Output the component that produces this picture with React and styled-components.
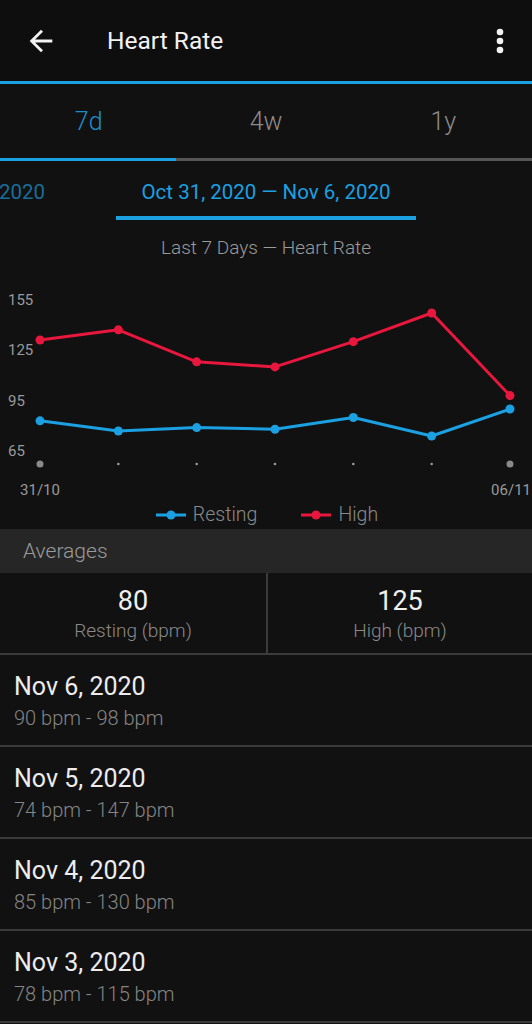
import React from "react"
import styled, { createGlobalStyle } from "styled-components"

const BLUE = "#1ba0e2"
const RED = "#e8173e"

const GlobalStyle = createGlobalStyle`
    html, body {
        margin: 0;
        padding: 0;
        background: #111111;
    }
    body {
        font-family: Roboto, "Noto Sans", sans-serif;
        -webkit-font-smoothing: antialiased;
    }
`

const Screen = styled.div`
    width: 532px;
    height: 1024px;
    overflow: hidden;
    background: #111111;
    color: #eeeeee;
`

const AppBar = styled.header`
    display: flex;
    align-items: center;
    height: 81px;
    padding: 0 26px 0 24px;
    background: #0e0e0e;
`

const IconButton = styled.div`
    display: flex;
    align-items: center;
    justify-content: center;
    width: ${p => p.$w}px;
    height: 34px;
`

const Title = styled.h1`
    flex: 1;
    margin: 0 0 0 49px;
    font-size: 24.5px;
    font-weight: 400;
    color: #f2f2f2;
`

const Rule = styled.div`
    height: 3px;
    background: ${BLUE};
`

const Tabs = styled.nav`
    display: grid;
    grid-template-columns: repeat(3, 1fr);
    height: 74px;
`

const Tab = styled.div`
    display: flex;
    align-items: center;
    justify-content: center;
    font-size: 25px;
    font-weight: 300;
    color: ${p => (p.$active ? "#1b8fcc" : "#8c8c8c")};
`

const TabTrack = styled.div`
    display: grid;
    grid-template-columns: 176px 1fr;
    height: 3px;
    background: #555555;
`

const TabThumb = styled.div`
    background: ${BLUE};
`

const DateStrip = styled.div`
    display: grid;
    grid-template-columns: 1fr 300px 1fr;
    padding-top: 19px;
    height: 41px;
`

const PrevRange = styled.div`
    display: flex;
    justify-content: flex-end;
    overflow: hidden;
    padding-right: 71px;
    white-space: nowrap;
    font-size: 20.5px;
    line-height: 24px;
    font-weight: 400;
    color: #1a6d99;
`

const CurrentRange = styled.div`
    display: flex;
    flex-direction: column;
    align-items: center;
    font-size: 20.5px;
    line-height: 24px;
    font-weight: 400;
    color: ${BLUE};
    white-space: nowrap;

    &::after {
        content: "";
        align-self: stretch;
        height: 4px;
        margin-top: 12px;
        background: ${BLUE};
    }
`

const ChartTitle = styled.div`
    padding: 15px 0 20px;
    text-align: center;
    font-size: 19px;
    line-height: 24px;
    font-weight: 300;
    color: #9a9a9a;
`

const ChartSvg = styled.svg`
    display: block;
    font-family: Roboto, "Noto Sans", sans-serif;
`

const Legend = styled.div`
    display: flex;
    justify-content: center;
    align-items: center;
    gap: 44px;
    height: 29px;
    padding-left: 2px;
`

const LegendItem = styled.div`
    display: flex;
    align-items: center;
    gap: 7px;
    font-size: 19.5px;
    font-weight: 300;
    color: #8a8a8a;
`

const SectionHeader = styled.div`
    display: flex;
    align-items: center;
    height: 44px;
    padding-left: 23px;
    background: #262626;
    font-size: 21px;
    font-weight: 300;
    color: #9a9a9a;
`

const Averages = styled.div`
    display: grid;
    grid-template-columns: 1fr 1fr;
    border-bottom: 2px solid #3b3b3b;
`

const AverageCell = styled.div`
    display: flex;
    flex-direction: column;
    align-items: center;
    height: 80px;
    padding-top: 12px;
    box-sizing: border-box;
    & + & {
        border-left: 2px solid #3b3b3b;
    }
`

const AverageValue = styled.div`
    font-size: 27px;
    line-height: 32px;
    font-weight: 400;
    color: #f0f0f0;
`

const AverageLabel = styled.div`
    margin-top: 3px;
    font-size: 19px;
    line-height: 22px;
    font-weight: 300;
    color: #8a8a8a;
`

const DayRow = styled.div`
    height: 92px;
    padding: 18px 0 0 14px;
    box-sizing: border-box;
    border-bottom: 2px solid #3b3b3b;
`

const DayTitle = styled.div`
    font-size: 25px;
    line-height: 28px;
    font-weight: 400;
    color: #ececec;
`

const DayRange = styled.div`
    margin-top: 5px;
    font-size: 20px;
    line-height: 24px;
    font-weight: 300;
    color: #858585;
`

const resting = [83, 77, 79, 78, 85, 74, 90]
const high = [131, 137, 118, 115, 130, 147, 98]

const days = [
    { date: "Nov 6, 2020", range: "90 bpm - 98 bpm" },
    { date: "Nov 5, 2020", range: "74 bpm - 147 bpm" },
    { date: "Nov 4, 2020", range: "85 bpm - 130 bpm" },
    { date: "Nov 3, 2020", range: "78 bpm - 115 bpm" },
]

// chart area sits at page y = 280, so subtract that from measured positions
const px = (i) => 40 + i * 78.33
const py = (v) => 280.7 - 1.685 * v

const Series = ({ values, color }) => {
    const pts = values.map((v, i) => `${px(i)},${py(v)}`).join(" ")
    return (
        <g>
            <polyline points={pts} fill="none" stroke={color} strokeWidth="3" strokeLinejoin="round" />
            {values.map((v, i) => (
                <circle key={i} cx={px(i)} cy={py(v)} r="4.5" fill={color} />
            ))}
        </g>
    )
}

const Chart = () => (
    <ChartSvg width="532" height="220" viewBox="0 0 532 220">
        {[155, 125, 95, 65].map(v => (
            <text key={v} x="8" y={py(v) + 5} fontSize="15" fill="#9a9a9a">{v}</text>
        ))}
        <Series values={high} color={RED} />
        <Series values={resting} color={BLUE} />
        {resting.map((_, i) => {
            const end = i === 0 || i === resting.length - 1
            return <circle key={i} cx={px(i)} cy="184" r={end ? 3.5 : 1.3} fill={end ? "#8a8a8a" : "#9a9a9a"} />
        })}
        <text x="40" y="215" fontSize="15" fill="#9a9a9a" textAnchor="middle">31/10</text>
        <text x="531" y="215" fontSize="15" fill="#9a9a9a" textAnchor="end">06/11</text>
    </ChartSvg>
)

const LegendMark = ({ color }) => (
    <svg width="30" height="10" viewBox="0 0 30 10">
        <line x1="0" y1="5" x2="30" y2="5" stroke={color} strokeWidth="3" />
        <circle cx="15" cy="5" r="4.5" fill={color} />
    </svg>
)

export default function App() {
    return (
        <Screen>
            <GlobalStyle />
            <AppBar>
                <IconButton $w={34}>
                    <svg width="34" height="34" viewBox="0 0 24 24">
                        <path d="M20 11H7.83l5.59-5.59L12 4l-8 8 8 8 1.41-1.41L7.83 13H20v-2z" fill="#f2f2f2" />
                    </svg>
                </IconButton>
                <Title>Heart Rate</Title>
                <IconButton $w={12}>
                    <svg width="12" height="30" viewBox="0 0 12 30">
                        <circle cx="6" cy="6" r="3.3" fill="#f2f2f2" />
                        <circle cx="6" cy="15" r="3.3" fill="#f2f2f2" />
                        <circle cx="6" cy="24" r="3.3" fill="#f2f2f2" />
                    </svg>
                </IconButton>
            </AppBar>
            <Rule />
            <Tabs>
                <Tab $active>7d</Tab>
                <Tab>4w</Tab>
                <Tab>1y</Tab>
            </Tabs>
            <TabTrack>
                <TabThumb />
            </TabTrack>
            <DateStrip>
                <PrevRange>Oct 24, 2020 — Oct 30, 2020</PrevRange>
                <CurrentRange>Oct 31, 2020 — Nov 6, 2020</CurrentRange>
                <div />
            </DateStrip>
            <ChartTitle>Last 7 Days — Heart Rate</ChartTitle>
            <Chart />
            <Legend>
                <LegendItem><LegendMark color={BLUE} />Resting</LegendItem>
                <LegendItem><LegendMark color={RED} />High</LegendItem>
            </Legend>
            <SectionHeader>Averages</SectionHeader>
            <Averages>
                <AverageCell>
                    <AverageValue>80</AverageValue>
                    <AverageLabel>Resting (bpm)</AverageLabel>
                </AverageCell>
                <AverageCell>
                    <AverageValue>125</AverageValue>
                    <AverageLabel>High (bpm)</AverageLabel>
                </AverageCell>
            </Averages>
            {days.map(d => (
                <DayRow key={d.date}>
                    <DayTitle>{d.date}</DayTitle>
                    <DayRange>{d.range}</DayRange>
                </DayRow>
            ))}
        </Screen>
    )
}
